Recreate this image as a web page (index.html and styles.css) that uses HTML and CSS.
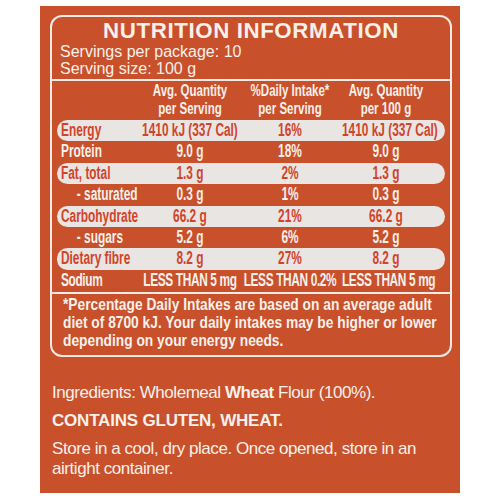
FILE: index.html
```html
<!DOCTYPE html>
<html>
<head>
<meta charset="utf-8">
<link rel="stylesheet" href="styles.css">
</head>
<body>
<div class="panel">
  <div class="box">
    <h1 class="title">NUTRITION INFORMATION</h1>
    <div class="servings">
      <div>Servings per package: 10</div>
      <div>Serving size: 100 g</div>
    </div>
    <div class="table">
      <div class="row head">
        <div class="cells">
          <div class="lbl"></div>
          <div class="c">Avg. Quantity<br>per Serving</div>
          <div class="c">%Daily Intake*<br>per Serving</div>
          <div class="c">Avg. Quantity<br>per 100 g</div>
        </div>
      </div>
      <div class="row pill"><div class="cells"><div class="lbl">Energy</div><div class="c">1410 kJ (337 Cal)</div><div class="c">16%</div><div class="c">1410 kJ (337 Cal)</div></div></div>
      <div class="row"><div class="cells"><div class="lbl">Protein</div><div class="c">9.0 g</div><div class="c">18%</div><div class="c">9.0 g</div></div></div>
      <div class="row pill"><div class="cells"><div class="lbl">Fat, total</div><div class="c">1.3 g</div><div class="c">2%</div><div class="c">1.3 g</div></div></div>
      <div class="row"><div class="cells"><div class="lbl sub">- saturated</div><div class="c">0.3 g</div><div class="c">1%</div><div class="c">0.3 g</div></div></div>
      <div class="row pill"><div class="cells"><div class="lbl">Carbohydrate</div><div class="c">66.2 g</div><div class="c">21%</div><div class="c">66.2 g</div></div></div>
      <div class="row"><div class="cells"><div class="lbl sub">- sugars</div><div class="c">5.2 g</div><div class="c">6%</div><div class="c">5.2 g</div></div></div>
      <div class="row pill"><div class="cells"><div class="lbl">Dietary fibre</div><div class="c">8.2 g</div><div class="c">27%</div><div class="c">8.2 g</div></div></div>
      <div class="row sodium"><div class="cells"><div class="lbl">Sodium</div><div class="c">LESS THAN 5 mg</div><div class="c">LESS THAN 0.2%</div><div class="c">LESS THAN 5 mg</div></div></div>
    </div>
    <div class="note">
      <p class="note-text">*Percentage Daily Intakes are based on an average adult<br>diet of 8700 kJ. Your daily intakes may be higher or lower<br>depending on your energy needs.</p>
    </div>
  </div>
  <div class="info">
    <p>Ingredients: Wholemeal <b>Wheat</b> Flour (100%).</p>
    <p class="contains">CONTAINS GLUTEN, WHEAT.</p>
    <p>Store in a cool, dry place. Once opened, store in an<br>airtight container.</p>
  </div>
</div>
</body>
</html>
```

FILE: styles.css
```css
html, body {
  margin: 0;
  padding: 0;
  background: #ffffff;
}
body {
  font-family: "Liberation Sans", Arial, sans-serif;
  color: #f8f0ea;
}
.panel {
  width: 420px;
  height: 487px;
  box-sizing: border-box;
  margin: 6px 0 0 40px;
  background: #c8512c;
  padding: 9px 8px 0 10px;
  overflow: hidden;
}
.box {
  border: 2px solid #f4ebe6;
  border-radius: 12px;
  box-sizing: border-box;
  height: 342px;
  overflow: hidden;
}
.title {
  margin: 0;
  padding-top: 3px;
  font-size: 22.3px;
  font-weight: bold;
  text-align: center;
  line-height: 22px;
  letter-spacing: 0.6px;
}
.servings {
  padding-left: 8px;
  font-size: 16px;
  line-height: 17px;
  margin-top: 1px;
}
.table {
  border-top: 2px solid #f4ebe6;
  margin-top: 2px;
  padding: 0 5px 1px 5px;
  border-bottom: 2px solid #f4ebe6;
  font-weight: bold;
  font-size: 18px;
}
.row {
  height: 21.4px;
  line-height: 21.4px;
  border-radius: 10.5px;
}
.cells {
  display: grid;
  grid-template-columns: 122.7px 145.5px 157.6px 133.3px;
  width: 566px;
  padding-left: 6px;
  transform: scaleX(0.66);
  transform-origin: 0 0;
}
.row.head {
  height: 39px;
  font-size: 16px;
  line-height: 17.5px;
}
.row.head .cells {
  grid-template-columns: 112.5px 133.3px 144.4px 122.2px;
  width: 518px;
  padding-left: 5.6px;
  padding-top: 1px;
  transform: scaleX(0.72);
}
.pill {
  background: #e8e5e2;
  color: #d3432a;
}
.sodium {
  letter-spacing: -0.55px;
}
.c {
  text-align: center;
  white-space: nowrap;
}
.lbl {
  white-space: nowrap;
}
.sub {
  padding-left: 24px;
}
.note {
  padding: 2px 0 0 11px;
}
.note-text {
  margin: 0;
  width: 470px;
  white-space: nowrap;
  font-weight: bold;
  font-size: 17px;
  line-height: 17.8px;
  transform: scaleX(0.81);
  transform-origin: 0 0;
}
.info {
  padding: 26px 0 0 2px;
  font-size: 17px;
  line-height: 20px;
  letter-spacing: -0.45px;
}
.info p {
  margin: 0 0 8px;
}
.info .contains {
  font-weight: bold;
  letter-spacing: -0.2px;
}
```
